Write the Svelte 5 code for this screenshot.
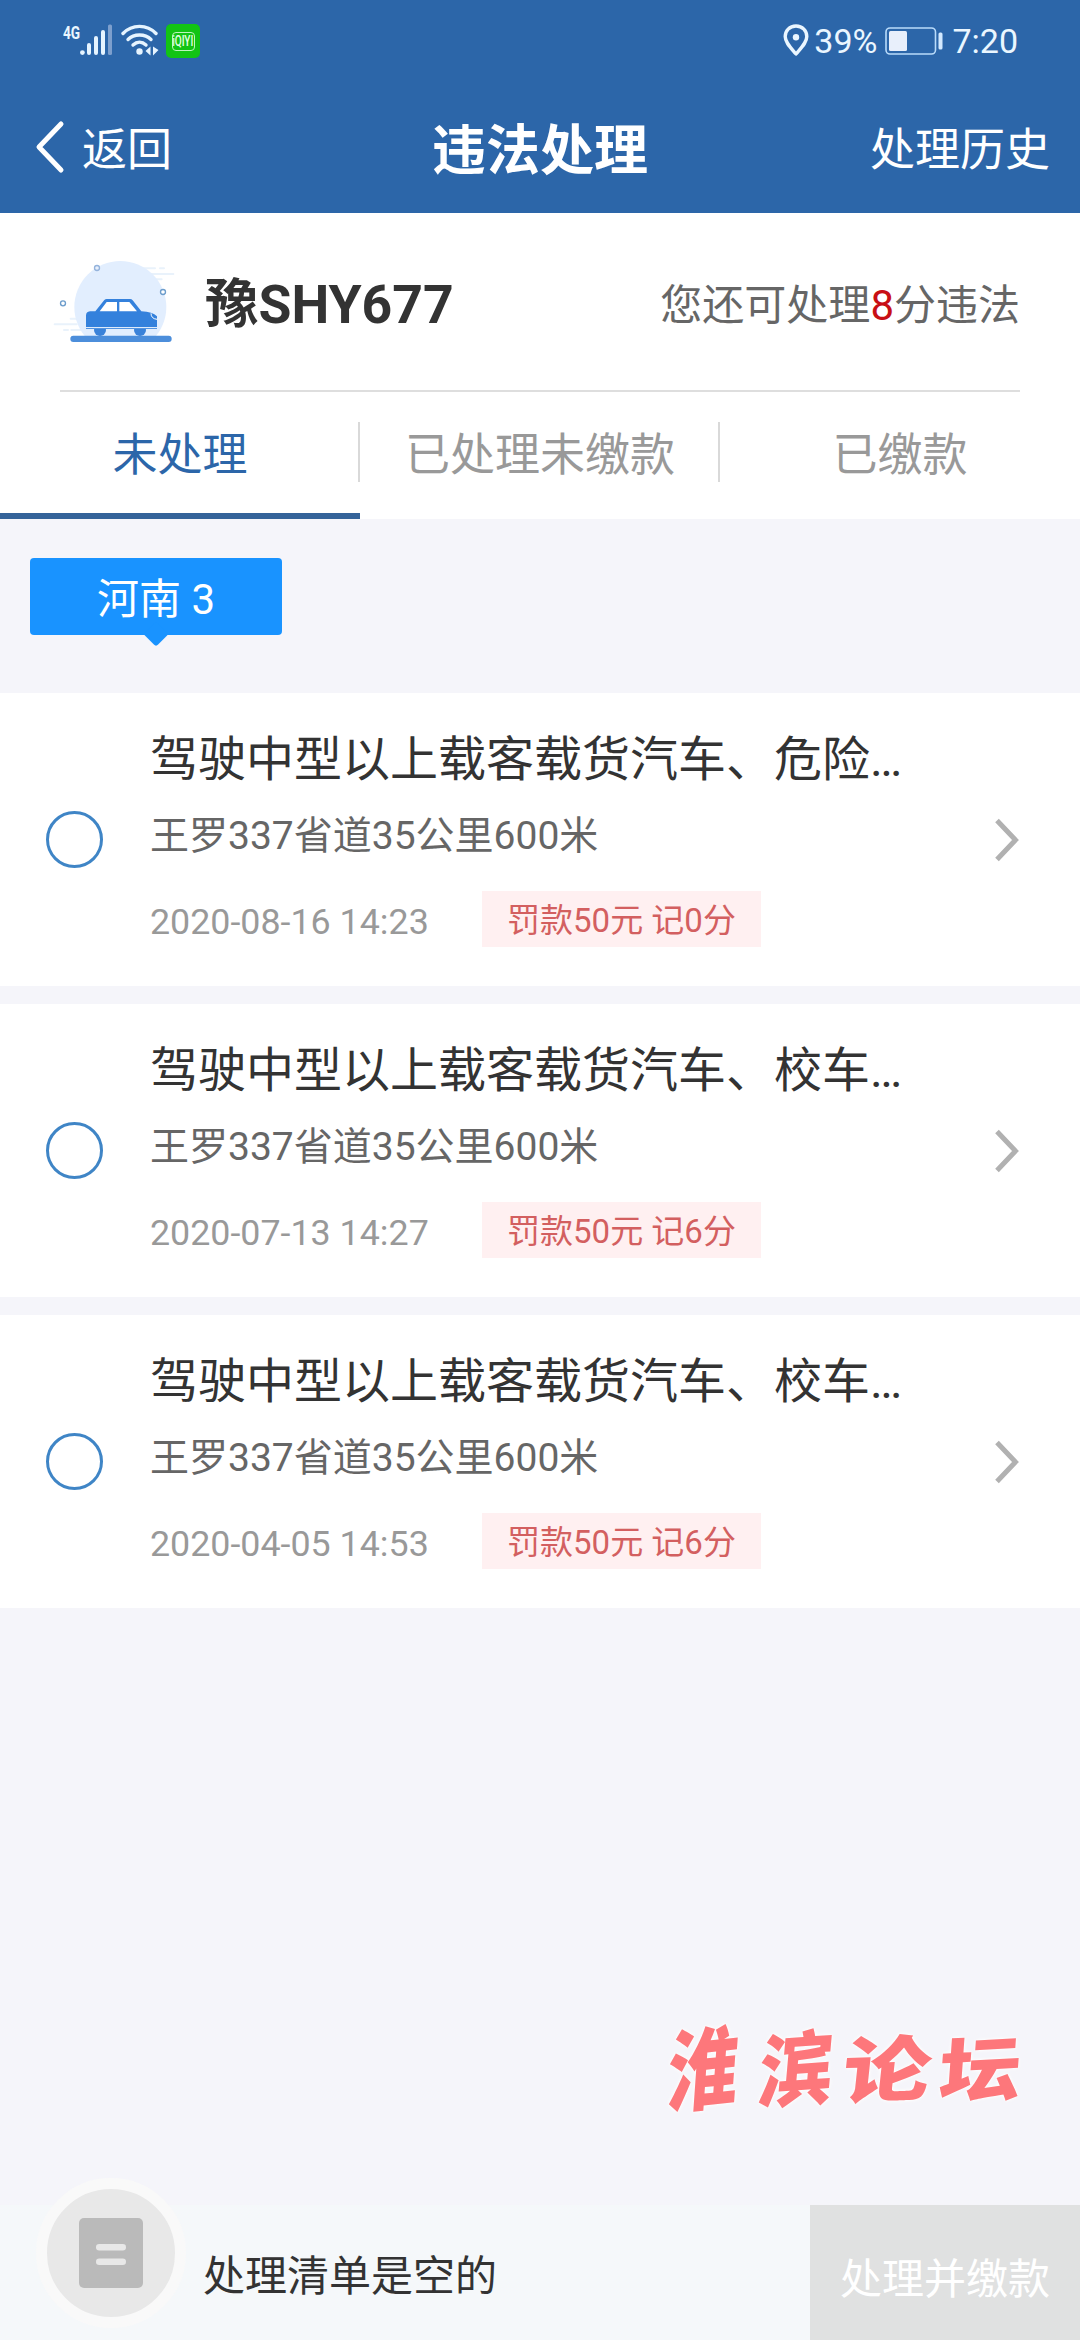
<script lang="ts">
	let activeTab = 0;

	const tabs = ['未处理', '已处理未缴款', '已缴款'];

	const violations = [
		{
			title: '驾驶中型以上载客载货汽车、危险…',
			place: '王罗337省道35公里600米',
			time: '2020-08-16 14:23',
			penalty: '罚款50元 记0分'
		},
		{
			title: '驾驶中型以上载客载货汽车、校车…',
			place: '王罗337省道35公里600米',
			time: '2020-07-13 14:27',
			penalty: '罚款50元 记6分'
		},
		{
			title: '驾驶中型以上载客载货汽车、校车…',
			place: '王罗337省道35公里600米',
			time: '2020-04-05 14:53',
			penalty: '罚款50元 记6分'
		}
	];
</script>

<div class="page">
	<header>
		<div class="status-bar">
			<div class="status-left">
				<span class="network">4G</span>
				<svg class="signal" width="34" height="32" viewBox="0 0 34 32">
					<g fill="#e6f4ff">
						<circle cx="2.4" cy="28.6" r="2.4" />
						<rect x="7" y="19" width="4" height="12" rx="2" />
						<rect x="14" y="12" width="4" height="19" rx="2" />
						<rect x="21" y="6" width="4" height="25" rx="2" />
					</g>
					<rect x="28" y="0.5" width="4" height="30.5" rx="1.5" fill="#7d9fcd" />
				</svg>
				<svg class="wifi" width="38" height="32" viewBox="0 0 38 32">
					<g fill="none" stroke="#e6f4ff" stroke-width="3.4" stroke-linecap="round">
						<path d="M2 9.5C11 0 26 0 35 9.5" />
						<path d="M7 15.5C13 9.5 24 9.5 30 15.5" />
						<path d="M12 21C16 17.2 21 17.2 25 21" />
					</g>
					<circle cx="18.5" cy="27.5" r="3.2" fill="#e6f4ff" />
					<path d="M24.5 27L29.5 22.5V31.5ZM32 22.5L37.5 26L32 31.5Z" fill="#e6f4ff" />
				</svg>
				<div class="app-badge">
					<span><i>iQIYI</i></span>
				</div>
			</div>
			<div class="status-right">
				<svg width="26" height="33" viewBox="0 0 26 33">
					<path
						d="M13 2C6.5 2 2.2 6.8 2.2 12.6C2.2 18.5 7.5 23.5 13 30C18.5 23.5 23.8 18.5 23.8 12.6C23.8 6.8 19.5 2 13 2Z"
						fill="none"
						stroke="#eaf6ff"
						stroke-width="3.4"
						stroke-linejoin="round"
					/>
					<circle cx="13" cy="13.2" r="3.2" fill="#eaf6ff" />
				</svg>
				<span class="percent">39%</span>
				<svg class="battery" width="59" height="28" viewBox="0 0 59 28">
					<rect x="1" y="1" width="49.5" height="26" rx="4" fill="none" stroke="#b9dbfa" stroke-width="1.6" />
					<rect x="4" y="4" width="18" height="20" rx="1.5" fill="#e8effb" />
					<rect x="53.5" y="5.5" width="4" height="17" rx="1.5" fill="#d3e9ff" />
				</svg>
				<span>7:20</span>
			</div>
		</div>
		<div class="nav-bar">
			<button class="back">
				<svg width="30" height="54" viewBox="0 0 30 54">
					<path
						d="M26 4L4 27L26 50"
						fill="none"
						stroke="#fff"
						stroke-width="5"
						stroke-linecap="round"
						stroke-linejoin="round"
					/>
				</svg>
				返回
			</button>
			<h1>违法处理</h1>
			<button class="history">处理历史</button>
		</div>
	</header>

	<section class="summary">
		<div class="vehicle">
			<svg class="car" width="150" height="110" viewBox="0 0 450 330">
				<g stroke="#e9f2fb" stroke-width="6" stroke-linecap="round">
					<path d="M305 55H345M360 55H372M320 72H400M335 88H365M92 206H110M44 223H110M72 240H84M94 240H125" />
				</g>
				<circle cx="241" cy="171" r="138" fill="#e2eefe" />
				<rect x="70" y="275" width="350" height="45" fill="#fff" />
				<g fill="#fff" stroke="#6d9dcc" stroke-width="4">
					<circle cx="171" cy="54" r="7.5" fill="#e8f0fc" stroke="#94b3dc" />
					<circle cx="369" cy="126" r="7.5" />
					<circle cx="69" cy="160" r="7.5" />
				</g>
				<rect x="91" y="257" width="304" height="19" rx="9" fill="#4c8edb" />
				<circle cx="180" cy="240" r="18" fill="#3a82d9" />
				<circle cx="300" cy="240" r="18" fill="#3a82d9" />
				<path
					d="M138 197Q138 185 150 184H166L193 150Q196 147 200 147H270Q275 147 278 151L304 184Q338 186 351 199V237H138Z"
					fill="#3481dc"
				/>
				<path d="M179 184L200 156H231V184ZM238 156H268L291 184H238Z" fill="#fff" />
				<path d="M138 233H351" stroke="#fff" stroke-width="3" />
				<path d="M333 190Q333 206 351 208" fill="none" stroke="#fff" stroke-width="3" />
			</svg>
			<strong>豫SHY677</strong>
			<p>您还可处理<em>8</em>分违法</p>
		</div>
		<nav class="tabs">
			{#each tabs as tab, i}
				<button class:active={activeTab === i} on:click={() => (activeTab = i)}>
					<span>{tab}</span>
				</button>
			{/each}
		</nav>
	</section>

	<div class="regions">
		<button class="region">河南 3</button>
	</div>

	<ul class="list">
		{#each violations as item}
			<li>
				<span class="radio"></span>
				<div class="info">
					<h2>{item.title}</h2>
					<p>{item.place}</p>
					<div class="meta">
						<time>{item.time}</time>
						<span class="penalty">{item.penalty}</span>
					</div>
				</div>
				<svg class="arrow" width="26" height="46" viewBox="0 0 26 46">
					<path d="M3 3.5L21.5 23L3 42.5" fill="none" stroke="#b1b1b1" stroke-width="5" />
				</svg>
			</li>
		{/each}
	</ul>

	<div class="watermark">
		<span>淮</span><span>滨</span><span>论</span><span>坛</span>
	</div>

	<footer>
		<div class="cart">
			<svg width="70" height="76" viewBox="0 0 70 76">
				<rect x="3" y="3" width="64" height="70" rx="5" fill="#bababa" />
				<rect x="20" y="29" width="30" height="6.5" rx="3.2" fill="#e8e8e8" />
				<rect x="20" y="43.5" width="30" height="6.5" rx="3.2" fill="#e8e8e8" />
			</svg>
		</div>
		<p>处理清单是空的</p>
		<button>处理并缴款</button>
	</footer>
</div>

<style>
	:global(body) {
		margin: 0;
		background: #f5f5fa;
	}

	.page {
		display: flex;
		flex-direction: column;
		width: 1080px;
		height: 2340px;
		background: #f5f5fa;
		font-family: Roboto, 'Noto Sans CJK SC', sans-serif;
		color: #333;
		overflow: hidden;
	}

	h1,
	h2,
	p,
	ul {
		margin: 0;
		padding: 0;
	}

	button {
		padding: 0;
		border: none;
		background: none;
		font: inherit;
		color: inherit;
		cursor: pointer;
	}

	svg {
		display: block;
		flex-shrink: 0;
	}

	header {
		height: 213px;
		background: #2c66a9;
		color: #fff;
	}

	.status-bar {
		display: flex;
		justify-content: space-between;
		height: 83px;
		box-sizing: border-box;
		padding: 24px 62px 0 63px;
		color: #eaf6ff;
	}

	.status-left,
	.status-right {
		display: flex;
		align-items: flex-start;
	}

	.network {
		width: 17px;
		font-size: 19px;
		font-weight: 700;
		line-height: 17px;
		transform: scaleX(0.72);
		transform-origin: left;
	}

	.signal {
		margin-right: 7px;
	}

	.wifi {
		margin-right: 7px;
	}

	.app-badge {
		display: flex;
		align-items: center;
		justify-content: center;
		width: 34px;
		height: 34px;
		border-radius: 5px;
		background: #12c414;
	}

	.app-badge span {
		display: flex;
		justify-content: center;
		width: 21px;
		height: 17px;
		border: 1.5px solid #bdf5bd;
		border-radius: 4px;
		color: #e2ffe2;
	}

	.app-badge i {
		font-size: 14px;
		font-style: normal;
		font-weight: 500;
		line-height: 17px;
		transform: scaleX(0.72);
	}

	.status-right {
		font-size: 34px;
		line-height: 34px;
	}

	.percent {
		margin-left: 5px;
	}

	.battery {
		margin: 3px 8px 0 8px;
	}

	.nav-bar {
		display: grid;
		grid-template-columns: 1fr auto 1fr;
		align-items: center;
		height: 127px;
		padding: 0 30px 0 35px;
		font-size: 45px;
	}

	.back {
		display: flex;
		align-items: center;
		gap: 17px;
	}

	h1 {
		font-size: 54px;
		font-weight: 700;
		margin-left: -5px;
	}

	.history {
		justify-self: end;
	}

	.summary {
		height: 306px;
		background: #fff;
	}

	.vehicle {
		display: flex;
		align-items: center;
		height: 177px;
		margin: 0 60px;
		border-bottom: 2px solid #dedede;
	}

	.car {
		margin: 7px 14px 0 -20px;
	}

	.vehicle strong {
		font-size: 53.5px;
		font-weight: 700;
		line-height: 60px;
		margin: 6px 0 0 1px;
	}

	.vehicle p {
		margin: 0 0 1px auto;
		font-size: 42px;
		color: #666;
	}

	em {
		font-style: normal;
		color: #c80f14;
	}

	.tabs {
		display: grid;
		grid-template-columns: repeat(3, 1fr);
		height: 127px;
	}

	.tabs button {
		display: flex;
		align-items: flex-start;
		padding-top: 30px;
		border-bottom: 6px solid transparent;
		font-size: 45px;
		color: #999;
	}

	.tabs span {
		flex: 1;
		height: 60px;
		padding-left: 2px;
		line-height: 68px;
		border-right: 2px solid #d9d9d9;
	}

	.tabs button:last-child span {
		border-right-color: transparent;
	}

	.tabs button.active {
		border-bottom-color: #346399;
		color: #2c66a9;
	}

	.regions {
		height: 135px;
		padding: 39px 30px 0;
	}

	.region {
		position: relative;
		width: 252px;
		height: 77px;
		padding-bottom: 2px;
		border-radius: 4px;
		background: #1993ff;
		font-size: 42px;
		color: #fff;
	}

	.region::after {
		content: '';
		position: absolute;
		left: 117px;
		bottom: -8px;
		width: 18px;
		height: 18px;
		border-radius: 3px;
		background: #1993ff;
		transform: rotate(45deg);
	}

	.list {
		display: flex;
		flex-direction: column;
		gap: 18px;
		list-style: none;
	}

	li {
		display: flex;
		align-items: center;
		height: 293px;
		box-sizing: border-box;
		padding: 0 60px 0 46px;
		background: #fff;
	}

	.radio {
		width: 57px;
		height: 57px;
		box-sizing: border-box;
		border: 3px solid #3f85c6;
		border-radius: 50%;
	}

	.info {
		flex: 1;
		margin: -6px 0 0 47px;
	}

	h2 {
		font-size: 48px;
		font-weight: 400;
		line-height: 70px;
	}

	.info p {
		font-size: 39px;
		line-height: 60px;
		margin: 11px 0 23px;
		color: #666;
	}

	.meta {
		display: flex;
		align-items: center;
		gap: 52px;
	}

	time {
		width: 280px;
		font-size: 35.8px;
		line-height: 56px;
		padding-top: 5px;
		margin-bottom: -1px;
		color: #999;
		white-space: nowrap;
	}

	.penalty {
		width: 279px;
		height: 56px;
		background: #fff0f1;
		font-size: 33px;
		line-height: 60px;
		text-align: center;
		color: #d35f60;
	}

	.watermark {
		display: flex;
		gap: 10px;
		align-self: flex-end;
		margin: 416px 60px 0 0;
		font-size: 80px;
		font-weight: 900;
		line-height: 96px;
		color: #fd777b;
		text-shadow: 0 0 3px #fff, 0 0 5px #fff;
	}

	/* brush-like slant, each glyph a little different */
	.watermark span:first-child {
		transform: translateX(-7px) skew(-4deg, -6deg) scale(0.88, 1.12);
	}

	.watermark span:nth-child(2) {
		transform: translateX(-4px) skew(-5deg, -4deg) scale(0.93, 1.02);
	}

	.watermark span:nth-child(3) {
		transform: translateX(-3px) skew(-6deg, -2deg) scale(1.1, 0.9);
	}

	.watermark span:last-child {
		transform: skew(-4deg, -3deg) scale(1.02, 0.88);
	}

	footer {
		display: flex;
		align-items: center;
		height: 135px;
		margin-top: auto;
		background: #f5f8fa;
		font-size: 42px;
	}

	.cart {
		display: flex;
		align-items: center;
		justify-content: center;
		width: 128px;
		height: 128px;
		margin: -39px 17px 0 36px;
		border: 11px solid #f9f9f9;
		border-radius: 50%;
		background: #e8e8e8;
	}

	footer button {
		width: 270px;
		height: 135px;
		margin-left: auto;
		padding-top: 5px;
		background: #e0e1e1;
		color: #fff;
	}
</style>
